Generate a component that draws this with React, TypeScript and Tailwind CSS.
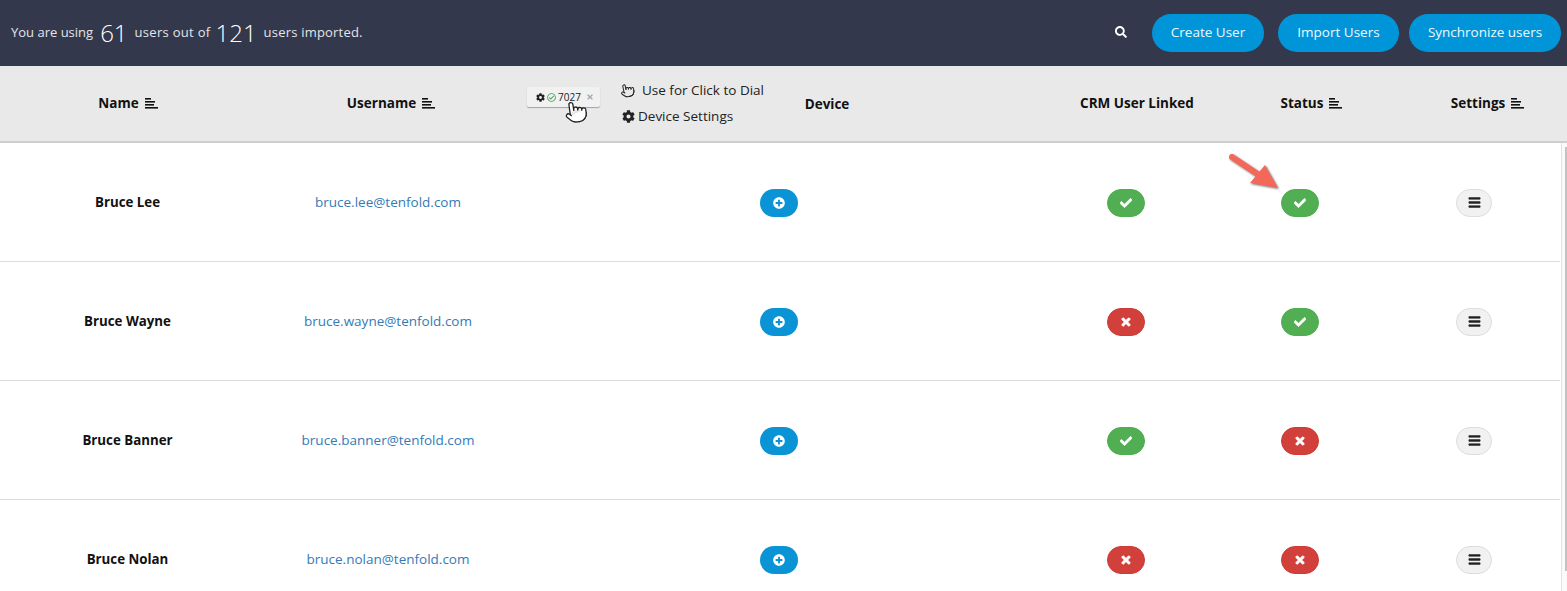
import { Pointer } from "lucide-react";
import {
  FaBars,
  FaCheck,
  FaCog,
  FaPlusCircle,
  FaRegCheckCircle,
  FaSearch,
  FaTimes,
} from "react-icons/fa";

const users = [
  { name: "Bruce Lee", email: "bruce.lee@tenfold.com", crm: true, status: true },
  { name: "Bruce Wayne", email: "bruce.wayne@tenfold.com", crm: false, status: true },
  { name: "Bruce Banner", email: "bruce.banner@tenfold.com", crm: true, status: false },
  { name: "Bruce Nolan", email: "bruce.nolan@tenfold.com", crm: false, status: false },
];

function SortIcon() {
  return (
    <svg width="13" height="11" viewBox="0 0 13 11" className="ml-[6px] shrink-0">
      <rect x="0" y="0" width="6" height="1.6" fill="#111" />
      <rect x="0" y="3" width="10" height="1.6" fill="#111" />
      <rect x="0" y="6" width="9" height="1.6" fill="#111" />
      <rect x="0" y="9" width="13" height="1.6" fill="#111" />
    </svg>
  );
}

function HeaderCell({ label, sort = true, className = "" }: { label: string; sort?: boolean; className?: string }) {
  return (
    <div className={`flex items-center justify-center text-[13.5px] font-bold text-[#111] ${className}`}>
      {label}
      {sort && <SortIcon />}
    </div>
  );
}

function StateButton({ ok }: { ok: boolean }) {
  return (
    <button
      className={`flex h-[28px] w-[38px] items-center justify-center rounded-full border text-white ${
        ok ? "border-[#4cae4c] bg-[#52ae52]" : "border-[#d03a36] bg-[#d2403c]"
      }`}
    >
      {ok ? <FaCheck size={12} stroke="white" strokeWidth={30} /> : <FaTimes size={12} stroke="white" strokeWidth={40} />}
    </button>
  );
}

export default function App() {
  return (
    <div className="relative h-[591px] w-full overflow-hidden bg-white font-['Open_Sans',sans-serif]">
      {/* top bar */}
      <div className="flex h-[66px] items-center justify-between bg-[#33384c] pl-[11px] pr-[6px]">
        <div className="flex items-center text-[13px] text-[#e4e5e9]">
          You are using
          <span className="ml-[7px] mr-[7px] text-[24px] font-light leading-none text-white">61</span>
          <span className="tracking-[0.3px]">users out of</span>
          <span className="ml-[5px] mr-[7px] text-[24px] font-light leading-none text-white">121</span>
          <span className="tracking-[0.2px]">users imported.</span>
        </div>
        <div className="flex items-center">
          <FaSearch size={12} className="mr-[25px] -mt-[2px] text-white" />
          <button className="mr-[14px] h-[38px] w-[112px] rounded-full bg-[#0095d9] pb-[1px] text-[13.5px] text-[#eef8fd]">
            Create User
          </button>
          <button className="mr-[10px] h-[38px] w-[121px] rounded-full bg-[#0095d9] pb-[1px] text-[13.5px] text-[#eef8fd]">
            Import Users
          </button>
          <button className="h-[38px] w-[152px] rounded-full bg-[#0095d9] pb-[1px] text-[13.5px] text-[#eef8fd]">
            Synchronize users
          </button>
        </div>
      </div>

      {/* table head */}
      <div className="relative grid h-[77px] grid-cols-[256px_270px_514px_194px_154px_1fr] items-center border-b-2 border-[#cfcfcf] bg-[#e9e9e9]">
        <HeaderCell label="Name" />
        <HeaderCell label="Username" />
        <HeaderCell label="Device" sort={false} className="pl-[88px] pt-[2px]" />
        <HeaderCell label="CRM User Linked" sort={false} />
        <HeaderCell label="Status" className="pl-[1px]" />
        <HeaderCell label="Settings" className="pl-[20px]" />

        {/* annotation over the header */}
        <div className="absolute left-[527px] top-[21px] flex h-[20px] w-[73px] items-center rounded-[2px] bg-[#f1f1f1] pl-[9px] text-[10px] text-[#222] shadow-[0_1px_1px_rgba(0,0,0,0.3)]">
          <FaCog size={9} />
          <FaRegCheckCircle size={9} className="ml-[2px] text-[#3aa655]" />
          <span className="ml-[2px]">7027</span>
          <FaTimes size={8} className="ml-[5px] text-[#aaa]" />
        </div>
        <Pointer size={24} strokeWidth={1.3} className="absolute left-[564px] top-[34px] rotate-[-8deg] fill-white text-[#222]" />
        <div className="absolute left-[620px] top-[15px] flex flex-col gap-[7px] text-[13.5px] leading-[18px] text-[#222]">
          <div className="flex items-center">
            <Pointer size={15} strokeWidth={1.6} className="mr-[7px] -rotate-12" />
            Use for Click to Dial
          </div>
          <div className="flex items-center pl-[2px] pt-[1px]">
            <FaCog size={13} className="mr-[3px]" />
            Device Settings
          </div>
        </div>
      </div>

      {/* rows and scrollbar */}
      <div className="flex">
        <div className="w-[1560px]">
          {users.map((user) => (
            <div
              key={user.email}
              className="grid h-[119px] grid-cols-[255px_266px_516px_178px_170px_1fr] items-center border-b border-[#dcdcdc] pt-[1px]"
            >
              <div className="text-center text-[13.3px] font-bold text-[#111]">{user.name}</div>
              <div className="text-center text-[13.5px] text-[#337ab7]">{user.email}</div>
              <div className="flex justify-center">
                <button className="flex h-[28px] w-[38px] items-center justify-center rounded-full bg-[#0a94d6] text-white">
                  <FaPlusCircle size={12} />
                </button>
              </div>
              <div className="flex justify-center">
                <StateButton ok={user.crm} />
              </div>
              <div className="flex justify-center">
                <StateButton ok={user.status} />
              </div>
              <div className="flex justify-center pl-[3px]">
                <button className="flex h-[28px] w-[36px] items-center justify-center rounded-full border border-[#dddddd] bg-[#f1f1f1] text-[#222]">
                  <FaBars size={13} stroke="#222" strokeWidth={20} />
                </button>
              </div>
            </div>
          ))}
        </div>
        <div className="ml-[1px] h-[449px] w-[6px] border-l border-[#e2e2e2] bg-[#fafafa] pl-[3px] pt-[4px]">
          <div className="h-[424px] w-[3px] bg-[#c2c2c2]" />
        </div>
      </div>

      {/* red arrow callout */}
      <svg
        width="60"
        height="44"
        viewBox="0 0 60 44"
        className="absolute left-[1226px] top-[150px] drop-shadow-[1px_1px_1px_rgba(0,0,0,0.55)]"
      >
        <path d="M6 7 L36 27" stroke="#f4685a" strokeWidth="6" strokeLinecap="round" />
        <path d="M39 15 L52 38 L24 33 Z" fill="#f4685a" />
      </svg>
    </div>
  );
}
